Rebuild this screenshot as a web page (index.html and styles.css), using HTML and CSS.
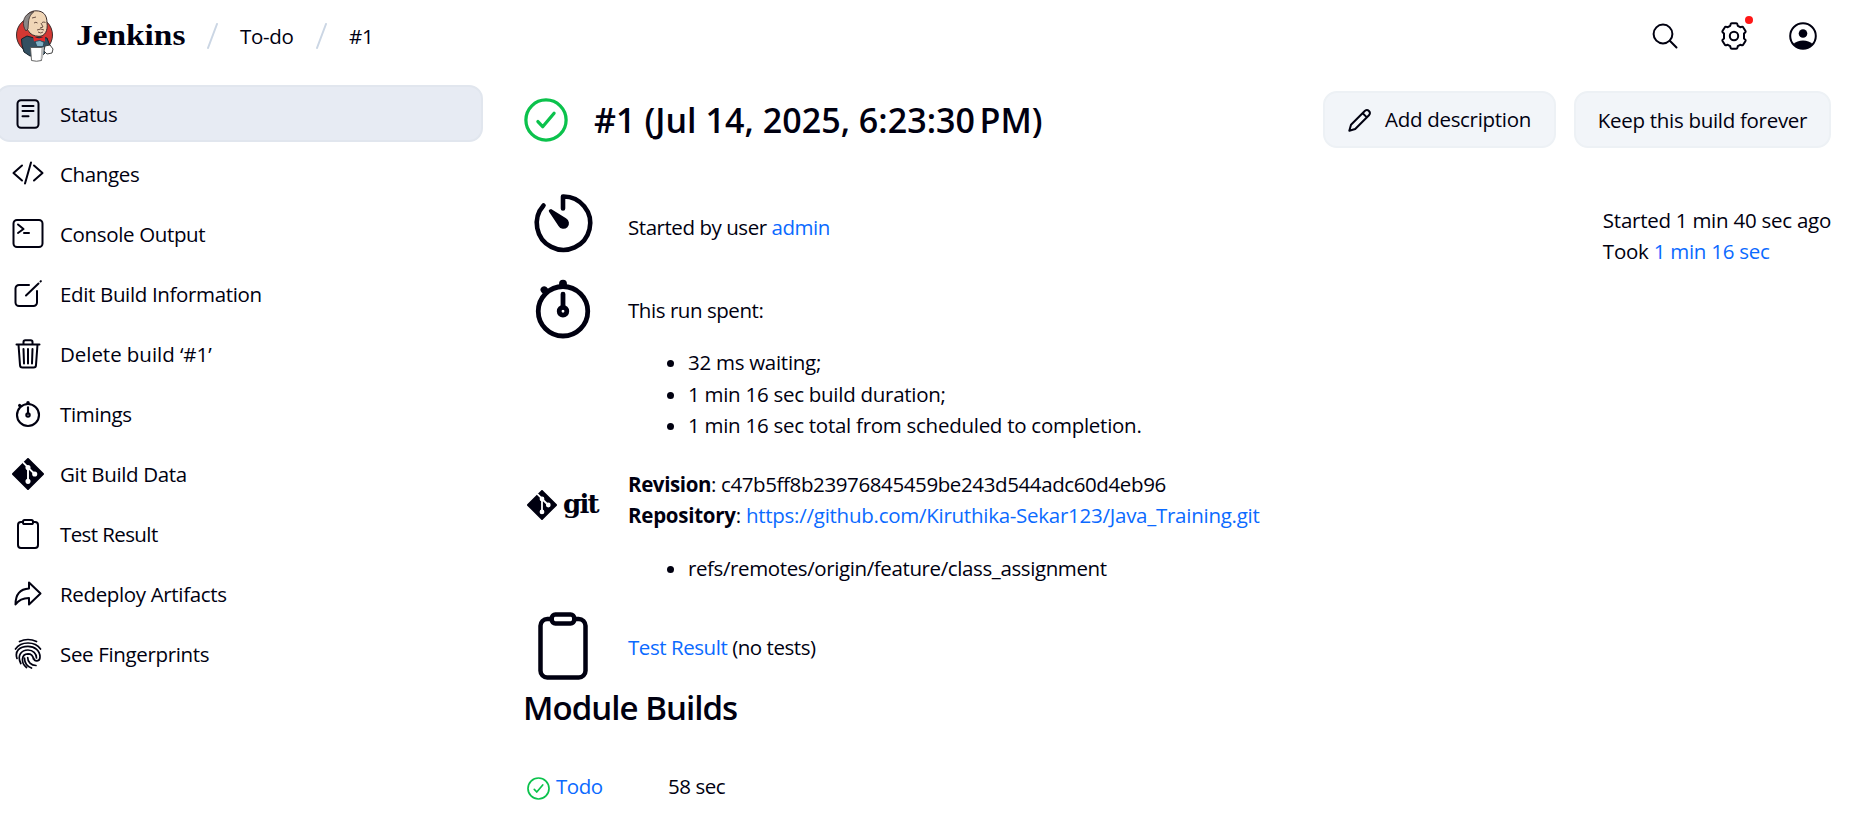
FILE: index.html
```html
<!DOCTYPE html>
<html lang="en">
<head>
<meta charset="utf-8">
<title>#1 - To-do - Jenkins</title>
<link rel="stylesheet" href="styles.css">
</head>
<body>
<svg class="defs" aria-hidden="true">
  <symbol id="check" viewBox="0 0 512 512"><circle cx="256" cy="256" r="234" fill="none" stroke="currentColor" stroke-width="38"/><path d="M350 178L217.600 334 162 274" fill="none" stroke="currentColor" stroke-width="38" stroke-linecap="round" stroke-linejoin="round"/></symbol>
  <symbol id="timer" viewBox="0 0 512 512"><g fill="none" stroke="currentColor" stroke-width="34" stroke-linecap="round" stroke-linejoin="round"><circle cx="256" cy="272" r="176"/><circle cx="256" cy="272" r="27"/><path d="M256 245V150"/></g><path d="M256 48a28 28 0 0 0-28 28v22h56V76a28 28 0 0 0-28-28zM106 100a25 25 0 0 0-3 36l20 20 35-35-20-21a25 25 0 0 0-32 0z" fill="currentColor"/></symbol>
  <symbol id="clipboard" viewBox="0 0 512 512"><g fill="none" stroke="currentColor" stroke-width="32" stroke-linejoin="round"><path d="M336 64h32a48 48 0 0 1 48 48v320a48 48 0 0 1-48 48H144a48 48 0 0 1-48-48V112a48 48 0 0 1 48-48h32"/><rect x="176" y="32" width="160" height="64" rx="26"/></g></symbol>
  <symbol id="git" viewBox="0 0 100 100"><path d="M50 3L97 50 50 97 3 50z" fill="currentColor" stroke="currentColor" stroke-width="6" stroke-linejoin="round"/><g stroke="#fff" stroke-width="6" fill="#fff"><path d="M34 13L50 29V73M50 30L71 50" fill="none"/><circle cx="50" cy="30" r="5"/><circle cx="50" cy="73" r="5"/><circle cx="71" cy="50" r="5"/></g></symbol>
</svg>

<header class="header">
  <svg class="logo" viewBox="0 0 38 52">
    <ellipse cx="18.500" cy="25" rx="18" ry="18" fill="#d33833" stroke="#3b2d2c"/>
    <path d="M5.500 29L11 26l7 2 5-1 8 1 3 8-3 5-4 4-13 1-6-4-2-7z" fill="#335061" stroke="#15212a"/>
    <path d="M8.500 15C8 5 14 .8 20 .8c8 0 11 5 11 12 1 8-2 13.500-8 13.500-5 0-9-2-11-6z" fill="#f0d6b7" stroke="#3b2d2c"/>
    <path d="M10 21C5.500 15 7 6 13.500 3L18 1.500C14 5 13 8 12.500 12l-.5 7z" fill="#8b8786" stroke="#3b2d2c" stroke-width=".8"/>
    <path d="M16 8l4-1M18 13q2-1.500 3.500 0M26 12.500q2-1 3.500 0M25 13l2 4-3 1M21 20q4-2 7 0M22 22q3 2 5 0" fill="none" stroke="#5b4238" stroke-width=".9"/>
    <path d="M17 26.500l6 2 6-2v5l-6-1-5 1z" fill="#e52b2b"/>
    <path d="M19 31.500l5-1 4 2-1 4h-6z" fill="#81b0c4" stroke="#203849" stroke-width=".7"/>
    <path d="M29 36l5-1 3 4-1 4-5 1-3-3z" fill="#fff" stroke="#333" stroke-width=".9"/>
    <path d="M14.500 37.500h12l-1 13q-5 1.500-10 0z" fill="#fff" stroke="#555" stroke-width=".9"/>
    <path d="M25.500 38l2.500-1-1 11-2.500 2z" fill="#bbb"/>
  </svg>
  <span class="brand">Jenkins</span>
  <svg class="slash" viewBox="0 0 11 26"><path d="M1 25L10 1"/></svg>
  <span class="crumb crumb-job">To-do</span>
  <svg class="slash" viewBox="0 0 11 26"><path d="M1 25L10 1"/></svg>
  <span class="crumb">#1</span>
  <nav class="actions">
    <svg class="act" viewBox="0 0 28 28"><g class="line"><circle cx="12" cy="12" r="9.400"/><path d="M18.800 18.800L25.500 25.500"/></g></svg>
    <span class="gear">
      <svg class="act" viewBox="0 0 28 28"><g class="line"><path d="M11.800 1.300h4.400q1 0 1.200 1l.4 1.500 2.400 1.400 1.600-.4q1-.3 1.500.6l2.200 3.600q.5.900-.3 1.500l-1.200 1.100v4.800l1.200 1.100q.8.600.3 1.500l-2.200 3.600q-.5.900-1.500.6l-1.600-.4-2.400 1.400-.4 1.500q-.2 1-1.200 1h-4.400q-1 0-1.200-1l-.4-1.500-2.400-1.400-1.600.4q-1 .3-1.500-.6L2.500 19q-.5-.9.300-1.500L4 16.400v-4.800l-1.200-1.100Q2 9.900 2.500 9l2.200-3.600q.5-.9 1.500-.6l1.600.4 2.400-1.400.4-1.500q.2-1 1.200-1z"/><circle cx="14" cy="14" r="4.200"/></g></svg>
      <i class="dot"></i>
    </span>
    <svg class="act" viewBox="0 0 28 28"><circle class="line" cx="14" cy="14" r="12.800"/><circle cx="14" cy="11.500" r="4.300"/><path d="M4.500 22Q8 18.500 14 18.500T23.500 22Q20 27 14 27T4.500 22z"/></svg>
  </nav>
</header>

<div class="page">
  <aside class="side">
    <a class="task active"><svg class="ico" viewBox="0 0 32 32"><g class="line"><rect x="5.500" y="2.200" width="21" height="27.500" rx="3.500"/><path d="M10.500 8h11M10.500 13h11M10.500 18.300h6"/></g></svg><span>Status</span></a>
    <a class="task"><svg class="ico" viewBox="0 0 32 32"><g class="line"><path d="M10 7.500L1.500 15l8.500 7.500M22 7.500l8.500 7.500-8.500 7.500M19 4.500l-6 21"/></g></svg><span>Changes</span></a>
    <a class="task"><svg class="ico" viewBox="0 0 32 32"><g class="line"><rect x="1.500" y="2" width="29" height="27" rx="3.500"/><path d="M6 6.500L11.500 11 6 15M12 15h5"/></g></svg><span>Console Output</span></a>
    <a class="task"><svg class="ico" viewBox="0 0 32 32"><g class="line"><path d="M17 7H7a3.500 3.500 0 0 0-3.500 3.500v14A3.500 3.500 0 0 0 7 28h14.500a3.500 3.500 0 0 0 3.500-3.500V13M14 17.500L26.500 5.500M28.500 3.500l.4-.4"/></g></svg><span>Edit Build Information</span></a>
    <a class="task"><svg class="ico" viewBox="0 0 32 32"><g class="line"><path d="M6.500 6.500L8 27a2.500 2.500 0 0 0 2.500 2.500h11A2.500 2.500 0 0 0 24 27l1.500-20.500M4.500 6.500h23M11.500 6.500V4A1.800 1.800 0 0 1 13.300 2.200h5.400A1.800 1.800 0 0 1 20.500 4v2.500M16 11v14.500M11.500 11l.5 14.500M20.500 11l-.5 14.500"/></g></svg><span class="wide">Delete build ‘#1’</span></a>
    <a class="task"><svg class="ico" viewBox="0 0 512 512"><use href="#timer" width="512" height="512"/></svg><span>Timings</span></a>
    <a class="task"><svg class="ico" viewBox="0 0 32 32"><use href="#git" width="32" height="32"/></svg><span>Git Build Data</span></a>
    <a class="task"><svg class="ico" viewBox="0 0 32 32"><use href="#clipboard" width="32" height="32"/></svg><span class="tight">Test Result</span></a>
    <a class="task"><svg class="ico" viewBox="0 0 32 32"><g class="line"><path d="M17 4.500L28.500 15.500 17 26.500V20C11 20 7 21.500 3.500 26.500 3.500 17 8 11 17 10.500z"/></g></svg><span>Redeploy Artifacts</span></a>
    <a class="task"><svg class="ico" viewBox="0 0 32 32"><g class="finger"><path d="M7.500 3.500Q16-.5 24.500 3.500M3.500 11C9 3 23 3 28.500 11M5 20.500C2.500 13 7.500 8.300 16 8.300c7 0 12 4.700 12 10.700 0 5-5.500 5-6.500 1M8.800 25.500C4.500 17 10 12 16 12c5 0 8.500 3.500 8.500 8M14.500 29.500C9 25 8.800 16 16 15.800c3.500 0 5 2.200 5.500 5.200M24 27.500c-5 0-8.300-3.500-8.300-8M19.500 30c-4-1.500-7-5-7-10"/></g></svg><span>See Fingerprints</span></a>
  </aside>

  <main class="main">
    <div class="bar">
      <svg class="status"><use href="#check"/></svg>
      <h1 class="title">#1 (Jul 14, 2025, 6:23:30&#8239;PM)</h1>
      <button class="btn btn-add"><svg class="pencil" viewBox="0 0 24 24"><g class="line"><path d="M1.300 22.700L3 16.800 17 2.800a3 3 0 0 1 4.200 4.200L7.200 21zM14.700 5.200l4.200 4.200"/></g></svg>Add description</button>
      <button class="btn btn-keep">Keep this build forever</button>
    </div>

    <div class="body">
      <div class="rows">
        <div class="row row-user">
          <svg class="big" viewBox="0 0 72 72"><g class="heavy"><path d="M36 21.500V9.500a26.700 26.700 0 1 1-19.500 9"/></g><path d="M23 22.500q-2 .5-.8 2.500l9.300 14a5.600 5.600 0 1 0 7.500-7.700L24.500 22.200q-.8-.3-1.500.3z"/></svg>
          <p>Started by user <a>admin</a></p>
        </div>
        <div class="row row-time">
          <svg class="big"><use href="#timer"/></svg>
          <div class="cell"><p>This run spent:</p>
          <ul class="list"><li>32 ms waiting;</li><li>1 min 16 sec build duration;</li><li>1 min 16 sec total from scheduled to completion.</li></ul></div>
        </div>
        <div class="row row-git">
          <div class="gitlogo"><svg class="gitmark" viewBox="0 0 100 100"><use href="#git"/></svg><span>git</span></div>
          <div class="cell"><p class="rev"><b>Revision</b>: c47b5ff8b23976845459be243d544adc60d4eb96</p><p class="repo"><b>Repository</b>: <a>https://github.com/Kiruthika-Sekar123/Java_Training.git</a></p>
          <ul class="list refs"><li>refs/remotes/origin/feature/class_assignment</li></ul></div>
        </div>
        <div class="row row-test">
          <svg class="big"><use href="#clipboard"/></svg>
          <p><a>Test Result</a> (no tests)</p>
        </div>
      </div>
      <div class="when"><p>Started 1 min 40 sec ago</p><p>Took <a>1 min 16 sec</a></p></div>
    </div>

    <h2 class="sub">Module Builds</h2>
    <div class="module"><svg class="mini"><use href="#check"/></svg><a class="todo">Todo</a><span>58 sec</span></div>
  </main>
</div>
</body>
</html>
```
FILE: styles.css
```css
* { box-sizing: border-box; }
body {
  margin: 0;
  height: 829px;
  overflow: hidden;
  background: #fff;
  color: #000010;
  font: 20.5px/31.400px "Open Sans", "Noto Sans", sans-serif;
  letter-spacing: -0.45px;
}
p, h1, h2, ul { margin: 0; }
a { color: #0b6aff; text-decoration: none; }
.defs { position: absolute; width: 0; height: 0; }
.line { fill: none; stroke: currentColor; stroke-width: 2; stroke-linecap: round; stroke-linejoin: round; }
.heavy { fill: none; stroke: currentColor; stroke-width: 4.600; stroke-linecap: round; stroke-linejoin: round; }
.finger { fill: none; stroke: currentColor; stroke-width: 1.700; stroke-linecap: round; }
svg { flex: none; display: block; fill: currentColor; }

.header { display: flex; align-items: center; height: 72px; padding: 0 37px 0 16px; }
.logo { width: 38px; height: 52px; margin-right: 22px; }
.brand { width: 131px; font: bold 29px/40px "Liberation Serif", serif; letter-spacing: 0; transform: scaleX(1.15); transform-origin: left; padding-bottom: 2px; }
.slash { width: 11px; height: 26px; }
.slash path { stroke: #cbd6e4; stroke-width: 2; stroke-linecap: round; }
.crumb { margin-left: 22px; padding-top: 2px; letter-spacing: -0.300px; }
.crumb-job { width: 76px; }
.actions { display: flex; gap: 41px; margin-left: auto; }
.act { width: 28px; height: 28px; }
.gear { position: relative; }
.dot { position: absolute; top: -6px; right: -5px; width: 8px; height: 8px; border-radius: 50%; background: #ff1717; }

.page { display: grid; grid-template-columns: 483px 1fr; column-gap: 40px; padding-top: 13px; }
.side { display: flex; flex-direction: column; gap: 3px; margin-left: -4px; letter-spacing: -0.350px; }
.task { display: flex; align-items: center; gap: 16px; height: 57px; padding-left: 16px; border-radius: 14px; color: inherit; }
.task span { padding-top: 2px; }
.tight { letter-spacing: -0.600px; }
.wide { letter-spacing: -0.050px; }
.active { background: #e7ebf3; border: 2px solid #e1e6ee; padding-left: 14px; }
.ico { width: 32px; height: 32px; }

.main { padding: 6px 23px 0 0; }
.bar { display: flex; align-items: center; height: 57px; }
.status { width: 44px; height: 44px; margin: 0 26px 0 1px; color: #0bc24c; }
.title { margin-right: auto; font-size: 34px; font-weight: 600; letter-spacing: 0.050px; line-height: 48px; padding-top: 1px; }
.btn { display: flex; align-items: center; justify-content: center; height: 57px; padding: 1px 0 0; border: 2px solid #edf1f5; border-radius: 14px; background: #f2f5f9; color: inherit; font: inherit; letter-spacing: -0.300px; }
.btn-add { width: 233px; gap: 13px; margin-right: 18px; }
.btn-keep { width: 257px; padding-top: 3px; }
.pencil { width: 24px; height: 24px; }

.body { display: flex; justify-content: space-between; padding-top: 39px; }
.row { display: grid; grid-template-columns: 80px auto; column-gap: 25px; }
.big { width: 72px; height: 72px; margin-left: 4px; }
.row-user { height: 86px; }
.row-user p { padding-top: 25px; }
.row-time { height: 190px; }
.row-time p { padding-top: 22px; }
.list { padding: 21px 0 0 60px; letter-spacing: -0.270px; }
.row-git { height: 147px; }
.row-git .cell { padding-top: 6px; }
.rev { letter-spacing: -0.390px; }
.repo { letter-spacing: -0.260px; }
.refs { letter-spacing: -0.390px; }
.gitlogo { display: flex; align-items: center; gap: 6px; height: 32px; margin: 26px 0 0 4px; }
.gitmark { width: 30px; height: 30px; }
.gitlogo span { font: bold 26px/30px "DejaVu Serif", serif; letter-spacing: -1.800px; padding-bottom: 3px; }
.row-test p { padding-top: 22px; }
.when { padding-top: 18px; letter-spacing: -0.250px; }
.sub { margin-top: 3px; font-size: 33px; font-weight: 600; line-height: 46px; letter-spacing: -0.950px; }
.module { display: flex; align-items: center; margin-top: 40px; }
.mini { width: 23px; height: 23px; margin: 4px 6px 0 4px; color: #0bc24c; }
.todo { width: 112px; }
```
